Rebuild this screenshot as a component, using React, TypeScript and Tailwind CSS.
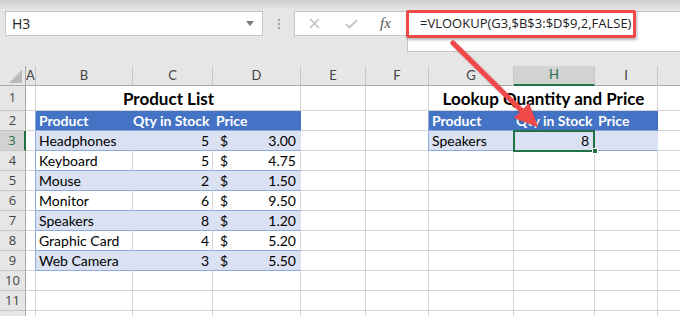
import React from "react";

// Excel sheet with a VLOOKUP formula highlighted and an arrow pointing at the result cell.

const COLS = ["A", "B", "C", "D", "E", "F", "G", "H", "I", ""];
const W = ["w-[10px]", "w-[97px]", "w-[80px]", "w-[88px]", "w-[65px]", "w-[63px]", "w-[85px]", "w-[81px]", "w-[63px]", "w-[90px]"];

const PRODUCTS: [string, number, string][] = [
  ["Headphones", 5, "3.00"],
  ["Keyboard", 5, "4.75"],
  ["Mouse", 2, "1.50"],
  ["Monitor", 6, "9.50"],
  ["Speakers", 8, "1.20"],
  ["Graphic Card", 4, "5.20"],
  ["Web Camera", 3, "5.50"],
];

type Cell = { cls?: string; body?: React.ReactNode };

const GRID = "border-r border-b border-[#d4d4d4] bg-white";

function buildRow(r: number): Cell[] {
  const cells: Cell[] = COLS.map(() => ({ cls: GRID }));
  const fill = "bg-[#d9e1f2] border-r border-b border-r-[#d9e1f2] border-b-[#8ea9db]";
  const white = "bg-white border-r border-b border-r-[#d4d4d4] border-b-[#8ea9db]";
  const head = "bg-[#4472c4] border-r border-b border-r-[#4472c4] border-b-[#8ea9db] text-white font-bold";

  if (r === 1) {
    cells[1] = { cls: "bg-white border-b border-[#d4d4d4]" };
    cells[2] = { cls: "bg-white border-b border-[#d4d4d4]", body: <span className="absolute left-[-97px] z-10 w-[265px] text-center text-[17px] font-bold text-black">Product List</span> };
    cells[3] = { cls: GRID };
    cells[6] = { cls: "bg-white border-b border-[#d4d4d4]" };
    cells[7] = { cls: "bg-white border-b border-[#d4d4d4]", body: <span className="absolute left-[-85px] z-10 w-[229px] text-center text-[17px] font-bold text-black">Lookup Quantity and Price</span> };
  }
  if (r === 2) {
    cells[0] = { cls: "bg-white border-r border-b border-r-[#8ea9db] border-b-[#d4d4d4]" };
    cells[1] = { cls: head, body: <span className="pl-[3px]">Product</span> };
    cells[2] = { cls: head, body: <span className="w-full pr-[3px] text-right">Qty in Stock</span> };
    cells[3] = { cls: head + " border-r-[#8ea9db]", body: <span className="pl-[3px]">Price</span> };
    cells[5] = { cls: "bg-white border-r border-b border-r-[#8ea9db] border-b-[#d4d4d4]" };
    cells[6] = { cls: head, body: <span className="pl-[3px]">Product</span> };
    cells[7] = { cls: head, body: <span className="pl-[2px]">Qty in Stock</span> };
    cells[8] = { cls: head + " border-r-[#8ea9db]", body: <span className="pl-[3px]">Price</span> };
  }
  if (r >= 3 && r <= 9) {
    const [name, qty, price] = PRODUCTS[r - 3];
    const base = r % 2 === 1 ? fill : white;
    cells[0] = { cls: "bg-white border-r border-b border-r-[#8ea9db] border-b-[#d4d4d4]" };
    cells[1] = { cls: base, body: <span className="pl-[3px]">{name}</span> };
    cells[2] = { cls: base, body: <span className="w-full pr-[3px] text-right">{qty}</span> };
    cells[3] = {
      cls: base + " border-r-[#8ea9db]",
      body: (
        <span className="flex w-full justify-between pl-[7px] pr-[4px]">
          <span>$</span>
          <span>{price}</span>
        </span>
      ),
    };
  }
  if (r === 3) {
    cells[5] = { cls: "bg-white border-r border-b border-r-[#8ea9db] border-b-[#d4d4d4]" };
    cells[6] = { cls: fill, body: <span className="pl-[3px]">Speakers</span> };
    cells[7] = {
      cls: fill,
      body: (
        <>
          <span className="w-full pr-[5px] text-right">8</span>
          <span className="absolute -left-px -top-px z-10 h-[22px] w-[82px] border-2 border-[#217346]" />
          <span className="absolute -bottom-[4px] -right-[4px] z-10 h-[6px] w-[6px] border border-white bg-[#217346]" />
        </>
      ),
    };
    cells[8] = { cls: fill + " border-r-[#8ea9db]" };
  }
  return cells;
}

function ColHeader() {
  return (
    <div className="flex h-[20px] text-[13px] text-[#444]">
      <div className="relative w-[26px] shrink-0 border-r border-b border-[#ababab] bg-[#e6e6e6]">
        <svg className="absolute left-[9px] top-[4px]" width="14" height="13" viewBox="0 0 14 13">
          <polygon points="13,0 13,13 0,13" fill="#b9b9b9" />
        </svg>
      </div>
      {COLS.map((c, i) =>
        c === "H" ? (
          <div key={i} className={`${W[i]} flex shrink-0 items-center justify-center border-r border-b-2 border-r-[#c6c6c6] border-b-[#217346] bg-[#d2d2d2] text-[#217346]`}>
            {c}
          </div>
        ) : (
          <div key={i} className={`${W[i]} flex shrink-0 items-center justify-center border-r border-b border-r-[#c6c6c6] border-b-[#ababab] bg-[#e6e6e6]`}>
            {c}
          </div>
        )
      )}
    </div>
  );
}

function SheetRow({ r, label = true }: { r: number; label?: boolean }) {
  const cells = buildRow(r);
  const sel = r === 3;
  return (
    <div className={`flex ${r === 1 ? "h-[25px]" : "h-[20px]"}`}>
      <div
        className={
          sel
            ? "flex w-[26px] shrink-0 items-center justify-center border-r-2 border-b border-r-[#217346] border-b-[#c6c6c6] bg-[#d2d2d2] text-[13px] text-[#217346]"
            : "flex w-[26px] shrink-0 items-center justify-center border-r border-b border-r-[#ababab] border-b-[#c6c6c6] bg-[#e6e6e6] text-[13px] text-[#444]"
        }
        style={{ fontFamily: '"Open Sans", sans-serif' }}
      >
        {label ? r : null}
      </div>
      {cells.map((c, i) => (
        <div key={i} className={`${W[i]} relative flex shrink-0 items-center whitespace-nowrap text-[14px] leading-none ${c.cls}`}>
          {c.body}
        </div>
      ))}
    </div>
  );
}

function Arrow() {
  return (
    <svg className="pointer-events-none absolute left-0 top-0 z-20" width="680" height="316">
      <defs>
        <filter id="sh" x="-20%" y="-20%" width="140%" height="140%">
          <feDropShadow dx="1" dy="1" stdDeviation="1" floodColor="#000" floodOpacity="0.25" />
        </filter>
      </defs>
      <g filter="url(#sh)">
        <line x1="453" y1="43" x2="523" y2="112" stroke="#ef4a4a" strokeWidth="5" strokeLinecap="round" />
        <polygon points="538,127 514,118 529,103" fill="#ef4a4a" />
      </g>
    </svg>
  );
}

export default function App() {
  return (
    <div className="relative h-[316px] w-[680px] overflow-hidden bg-[#e6e6e6]" style={{ fontFamily: "Lato, sans-serif" }}>
      <div className="h-[10px] bg-gradient-to-b from-[#cdcdcd] to-[#e6e6e6]" />
      <div className="flex h-[56px] items-start pl-[5px]" style={{ fontFamily: '"Open Sans", sans-serif' }}>
        <div className="mt-px flex h-[25px] w-[258px] items-center justify-between border border-[#c6c6c6] bg-white pl-[6px] pr-[8px] text-[14px] text-[#222]">
          <span>H3</span>
          <svg width="8" height="5" viewBox="0 0 8 5">
            <polygon points="0,0 8,0 4,5" fill="#7a7a7a" />
          </svg>
        </div>
        <div className="mt-[9px] flex w-[31px] flex-col items-center gap-[2px]">
          <span className="h-[2px] w-[2px] bg-[#a0a0a0]" />
          <span className="h-[2px] w-[2px] bg-[#a0a0a0]" />
          <span className="h-[2px] w-[2px] bg-[#a0a0a0]" />
        </div>
        <div className="mt-px flex h-[25px] w-[113px] items-center border border-r-0 border-[#c6c6c6] bg-white">
          <svg className="ml-[14px]" width="11" height="11" viewBox="0 0 11 11">
            <path d="M1 1L10 10M10 1L1 10" stroke="#c4c4c4" strokeWidth="1.6" />
          </svg>
          <svg className="ml-[25px]" width="13" height="10" viewBox="0 0 13 10">
            <path d="M1 5L4.5 8.5L12 1" stroke="#c4c4c4" strokeWidth="1.8" fill="none" />
          </svg>
          <span className="ml-[22px] text-[15px] italic text-[#555]" style={{ fontFamily: '"Liberation Serif", serif' }}>
            fx
          </span>
        </div>
        <div className="relative mt-px h-[41px] flex-1 border border-r-0 border-[#c6c6c6] bg-white">
          <div className="absolute -left-[2px] -top-[2px] flex h-[28px] w-[230px] items-center rounded-[2px] border-[3px] border-[#ef4a4a] pl-[11px] text-[13px] text-[#222] shadow-[1px_2px_3px_rgba(0,0,0,0.3)]">
            =VLOOKUP(G3,$B$3:$D$9,2,FALSE)
          </div>
        </div>
      </div>
      <ColHeader />
      {Array.from({ length: 11 }, (_, i) => (
        <SheetRow key={i} r={i + 1} />
      ))}
      <SheetRow r={12} label={false} />
      <Arrow />
    </div>
  );
}
